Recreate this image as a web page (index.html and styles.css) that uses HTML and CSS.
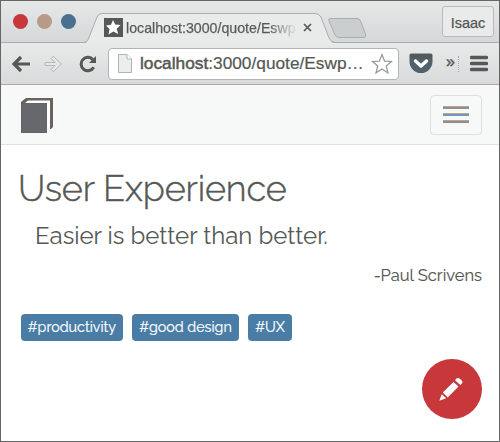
FILE: index.html
```html
<!DOCTYPE html>
<html lang="en">
<head>
<meta charset="utf-8">
<title>User Experience</title>
<link rel="stylesheet" href="styles.css">
</head>
<body>
<div class="window">
  <div class="tabstrip">
    <div class="lights"><i class="light red"></i><i class="light tan"></i><i class="light blue"></i></div>
    <div class="tab">
      <svg class="tab-shape" width="252" height="31" viewBox="0 0 252 31"><path d="M0 30.5H1Q3 30 4 27L13 4Q14.500 .5 18 .5H231Q235 .5 237 4L246 27Q248 30.500 252 30.500V31H0Z" fill="#e9ebea"/><path d="M0 29.500Q3 29 4 27L13 4Q14.500 .5 18 .5H231Q235 .5 237 4L245 25Q247 29.500 251 29.500" fill="none" stroke="#a9adae"/></svg>
      <svg class="favicon" width="19" height="19" viewBox="0 0 19 19"><path d="M0 0H19V19H0Z" fill="#555854"/><path d="M9 2L11.200 6.500L16.500 7L12.700 10.700L14.200 16L9.300 13.500L4.500 16.500L5.500 11L2 7.500L7 6.700Z" fill="#fff"/></svg>
      <span class="tab-title">localhost:3000/quote/Eswp</span>
      <svg class="close" width="9" height="9" viewBox="0 0 9 9"><path d="M1 1L8 8M8 1L1 8" stroke="#555854" stroke-width="1.700"/></svg>
    </div>
    <svg class="newtab" width="39" height="21" viewBox="0 0 39 21"><path d="M2 .5H29Q31.500 .5 32.500 3L37.500 16Q38.500 19.500 35 19.500H11Q8.500 19.500 7 17L1 3Q0 .5 2 .5Z" fill="#cbcecf" stroke="#a9adae"/></svg>
    <div class="user">Isaac</div>
  </div>
  <div class="toolbar">
    <svg class="back" width="20" height="18" viewBox="0 0 20 18"><path d="M19 9H3M10 2L3 9L10 16" fill="none" stroke="#555854" stroke-width="3.200"/></svg>
    <svg class="forward" width="20" height="18" viewBox="0 0 20 18"><path d="M1 7.500H11L7 3.500L9.500 1.500L17.500 9L9.500 16.500L7 14.500L11 10.500H1Z" fill="#e4e6e7" stroke="#b5b8ba"/></svg>
    <svg class="reload" width="18" height="18" viewBox="0 0 18 18"><path d="M14.700 12.200A6.700 6.700 0 1 1 14 4.800" fill="none" stroke="#555854" stroke-width="3"/><path d="M17 1V8H10Z" fill="#555854"/></svg>
    <div class="address">
      <svg class="page" width="14" height="19" viewBox="0 0 14 19"><path d="M.5 .5H9L13.500 5V18.500H.5Z" fill="#eceeee" stroke="#b0b3b3"/><path d="M9 .5V5H13.500" fill="#fff" stroke="#b0b3b3"/></svg>
      <span class="url"><b>localhost</b>:3000/quote/Eswp…</span>
      <svg class="star" width="22" height="22" viewBox="0 0 22 22"><path d="M11 1.500L13.600 8.100L20.500 8.500L15.200 13L17 20L11 16L5 20L6.800 13L1.500 8.500L8.400 8.100Z" fill="#fff" stroke="#939796" stroke-width="1.200"/></svg>
    </div>
    <svg class="pocket" width="24" height="21" viewBox="0 0 24 21"><path d="M2 .5H22Q23.500 .5 23.500 2V8.500A11.500 11.500 0 0 1 .5 8.500V2Q.5 .5 2 .5Z" fill="#50606c"/><path d="M1 3.300H23" stroke="#555854" stroke-width="4"/><path d="M6.500 8L12 13L17.500 8" fill="none" stroke="#fff" stroke-width="3.500" stroke-linecap="round" stroke-linejoin="round"/></svg>
    <span class="more">»</span>
    <i class="divider"></i>
    <svg class="menu" width="18" height="17" viewBox="0 0 18 17"><path d="M1.500 2.500H16.500M1.500 8.500H16.500M1.500 14.500H16.500" stroke="#555854" stroke-width="3.500" stroke-linecap="round"/></svg>
  </div>
  <div class="navbar">
    <svg class="book" width="34" height="37" viewBox="0 0 34 37"><path d="M1 5L6 1H33V30L31 32H30V4H8L5 6H27V36H1Z" fill="#6a625e"/><path d="M5.500 6L8 3.500H30V29H27.500V6Z" fill="#fff"/><path d="M2 7V35H26.500V7" fill="#66686d"/></svg>
    <div class="toggle"><i></i><i class="mid"></i><i></i></div>
  </div>
  <main>
    <h1>User Experience</h1>
    <p class="quote">Easier is better than better.</p>
    <p class="author"><span>-Paul Scrivens</span></p>
    <div class="tags"><span class="t1">#productivity</span><span class="t2">#good design</span><span class="t3">#UX</span></div>
  </main>
  <div class="edit"><svg width="28" height="28" viewBox="0 0 28 28"><path d="M4.800 17.500L15.500 7L20.500 11.500L9.700 22.500ZM17 5.300L18.500 3.500Q20 2.300 21.500 3.500L23.800 5.500Q25.200 7 24 8.500L22.300 10ZM3.700 19.300L8.200 23.300L1.300 25.700Z" fill="#fff"/></svg></div>
</div>
</body>
</html>
```
FILE: styles.css
```css
* { box-sizing: border-box; }
body { margin: 0; background: #fff; color: #555854; font-family: "Liberation Sans", sans-serif; }
svg { display: block; flex: none; }
.window { position: relative; width: 500px; height: 442px; border: 1px solid #666; background: #fff; overflow: hidden; }

.tabstrip { display: flex; height: 42px; border-bottom: 1px solid #a9adae; background: linear-gradient(#e6e8e8, #d5d8d9); }
.lights { display: flex; gap: 9px; padding: 13px 0 0 12px; width: 85px; }
.light { width: 15px; height: 15px; border-radius: 50%; }
.red { background: #c8383b; }
.tan { background: #b79b86; }
.blue { background: #49708f; }
.tab { position: relative; z-index: 1; display: flex; width: 241px; height: 31px; margin-top: 12px; padding-left: 18px; }
.tab-shape { position: absolute; left: -2px; top: 0; z-index: -1; }
.favicon { margin-top: 5px; }
.tab-title { width: 171px; margin: 6px 0 0 3px; font-size: 14.2px; line-height: 18px; -webkit-text-stroke: .25px transparent; white-space: nowrap; overflow: hidden; background: linear-gradient(90deg, #555854 142px, #d8dada 168px); background-clip: text; color: transparent; }
.close { margin: 10px 0 0 6px; }
.newtab { margin: 17px 0 0 1px; }
.user { width: 52px; height: 31px; margin: 5px 5px 0 auto; border: 1px solid #b8bbbc; border-radius: 3px; background: #e9ebeb; font-size: 14.5px; line-height: 33px; text-align: center; -webkit-text-stroke: .25px; }

.toolbar { display: flex; align-items: center; height: 42px; border-bottom: 1px solid #b7a79d; background: linear-gradient(#e8eaea, #d8dadb); }
.back { margin-left: 10px; }
.forward { margin-left: 13px; }
.reload { margin-left: 15px; }
.address { display: flex; align-items: center; width: 291px; height: 32px; margin-left: 11px; border: 1px solid #b2b5b6; border-radius: 4px; background: #fff; }
.page { margin-left: 9px; }
.url { width: 225px; margin-left: 8px; font-size: 17.3px; -webkit-text-stroke: .2px; white-space: nowrap; }
.url b { font-weight: 400; -webkit-text-stroke: .5px; }
.star { margin-left: 6px; }
.pocket { margin-left: 10px; }
.more { width: 9px; margin: 0 0 3px 13px; font-size: 16px; -webkit-text-stroke: .4px; }
.divider { height: 16px; margin-left: 3px; border-left: 1px dotted #aaa; }
.menu { margin-left: 11px; }

.navbar { display: flex; align-items: center; justify-content: space-between; height: 60px; padding: 0 17px 0 19px; border-bottom: 1px solid #e0e2e2; background: #f7f9f9; }
.book { margin-top: 2px; }
.toggle { display: flex; flex-direction: column; align-items: center; justify-content: center; gap: 4px; width: 52px; height: 40px; border: 1px solid #dfe1e1; border-radius: 4px; }
.toggle i { width: 26px; height: 3px; border-top: 1px solid #bda592; background: #908e90; }
.toggle .mid { background: #7398b8; }

main { padding: 18px 18px 0 17px; font-family: Raleway, Lato, sans-serif; }
h1, p { margin: 0; white-space: nowrap; }
h1 { font-size: 36px; font-weight: 300; line-height: 50px; letter-spacing: -0.12px; -webkit-text-stroke: .45px; }
.quote { padding-left: 17px; font-size: 24px; line-height: 46px; }
.author { margin-right: -1px; font-size: 16.5px; line-height: 32px; text-align: right; -webkit-text-stroke: .15px; }
.tags { display: flex; gap: 9px; margin-top: 23px; padding-left: 3px; color: #fff; font-size: 14.3px; line-height: 26px; -webkit-text-stroke: .2px; }
.tags span { height: 27px; border-radius: 4px; background: #4a7da6; text-align: center; }
.t1 { width: 102px; }
.t2 { width: 107px; }
.t3 { width: 44px; }
.edit { position: absolute; left: 421px; top: 358px; display: flex; align-items: center; justify-content: center; width: 60px; height: 60px; border-radius: 50%; background: #c8383b; }
```
